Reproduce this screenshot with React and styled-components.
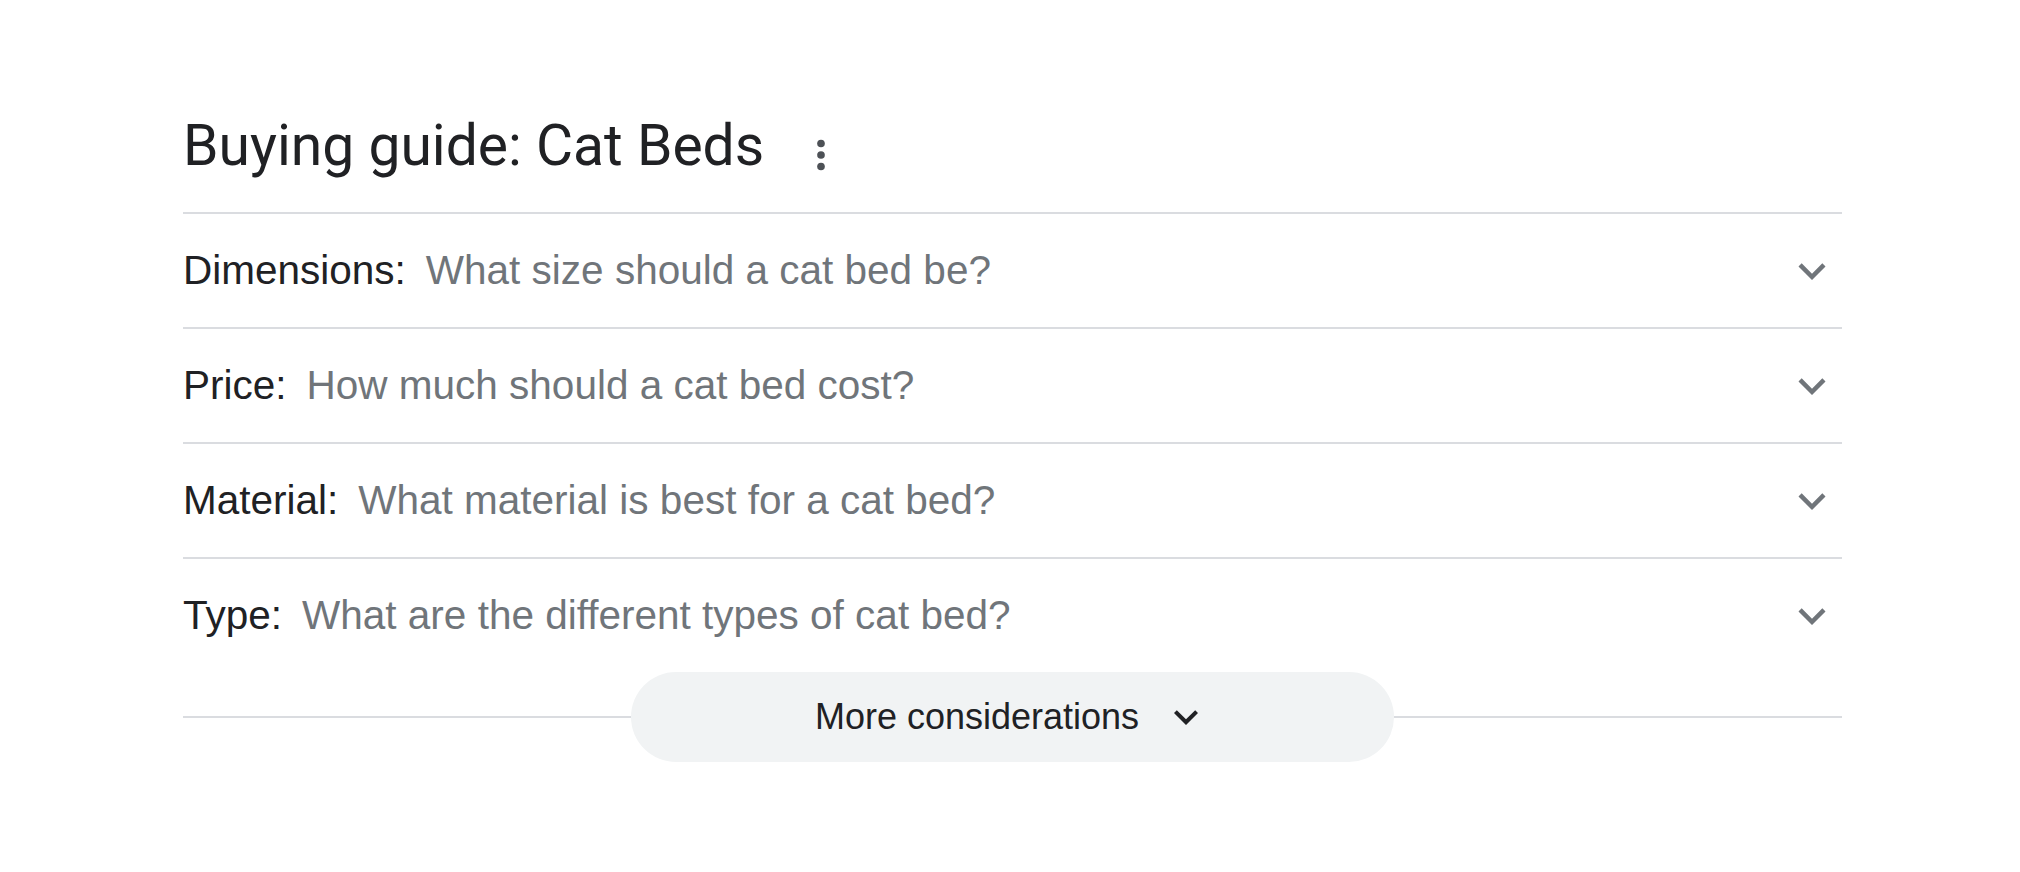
import React from "react";
import styled, { createGlobalStyle } from "styled-components";

const Global = createGlobalStyle`
  html, body { margin: 0; padding: 0; background: #fff; }
  body { font-family: "Liberation Sans", Arial, sans-serif; }
`;

const Page = styled.div`
  padding: 110px 0 0 183px;
  width: 1659px;
`;

const Header = styled.div`
  display: flex;
  align-items: flex-end;
  padding-bottom: 30px;
  border-bottom: 2px solid #dadce0;
`;

const Title = styled.h2`
  margin: 0;
  font-family: Roboto, "Liberation Sans", sans-serif;
  font-weight: 400;
  font-size: 57px;
  line-height: 72px;
  color: #202124;
`;

const MoreBtn = styled.span`
  display: flex;
  width: 46px;
  height: 46px;
  margin: 0 0 4px 34px;
  color: #4d5156;
`;

const List = styled.div`
  display: flex;
  flex-direction: column;
`;

const Row = styled.div`
  display: flex;
  align-items: center;
  height: 113px;
  border-bottom: 2px solid #dadce0;
  &:last-child { border-bottom: none; }
`;

const Label = styled.span`
  font-size: 40.5px;
  color: #202124;
`;

const Question = styled.span`
  margin-left: 20px;
  font-size: 40.5px;
  color: #70757a;
  flex: 1;
`;

const Chevron = styled.span`
  display: flex;
  width: ${(p) => p.size}px;
  height: ${(p) => p.size}px;
  color: ${(p) => p.color};
  margin-right: ${(p) => p.mr || 0}px;
`;

const Footer = styled.div`
  display: flex;
  align-items: center;
`;

const Rule = styled.div`
  flex: 1;
  height: 2px;
  background: #dadce0;
`;

const Button = styled.div`
  display: flex;
  align-items: center;
  justify-content: center;
  gap: 23px;
  width: 763px;
  height: 90px;
  border-radius: 45px;
  background: #f1f3f4;
  font-size: 36px;
  color: #202124;
`;

const ExpandIcon = () => (
  <svg viewBox="0 0 24 24" width="100%" height="100%" fill="currentColor">
    <path d="M16.59 8.59L12 13.17 7.41 8.59 6 10l6 6 6-6z" />
  </svg>
);

const DotsIcon = () => (
  <svg viewBox="0 0 24 24" width="100%" height="100%" fill="currentColor">
    <circle cx="12" cy="6" r="2" />
    <circle cx="12" cy="12" r="2" />
    <circle cx="12" cy="18" r="2" />
  </svg>
);

const rows = [
  ["Dimensions:", "What size should a cat bed be?"],
  ["Price:", "How much should a cat bed cost?"],
  ["Material:", "What material is best for a cat bed?"],
  ["Type:", "What are the different types of cat bed?"],
];

export default function App() {
  return (
    <>
      <Global />
      <Page>
        <Header>
          <Title>Buying guide: Cat Beds</Title>
          <MoreBtn>
            <DotsIcon />
          </MoreBtn>
        </Header>
        <List>
          {rows.map(([l, q]) => (
            <Row key={l}>
              <Label>{l}</Label>
              <Question>{q}</Question>
              <Chevron size={54} color="#70757a" mr={3}>
                <ExpandIcon />
              </Chevron>
            </Row>
          ))}
        </List>
        <Footer>
          <Rule />
          <Button>
            More considerations
            <Chevron size={48} color="#202124">
              <ExpandIcon />
            </Chevron>
          </Button>
          <Rule />
        </Footer>
      </Page>
    </>
  );
}
